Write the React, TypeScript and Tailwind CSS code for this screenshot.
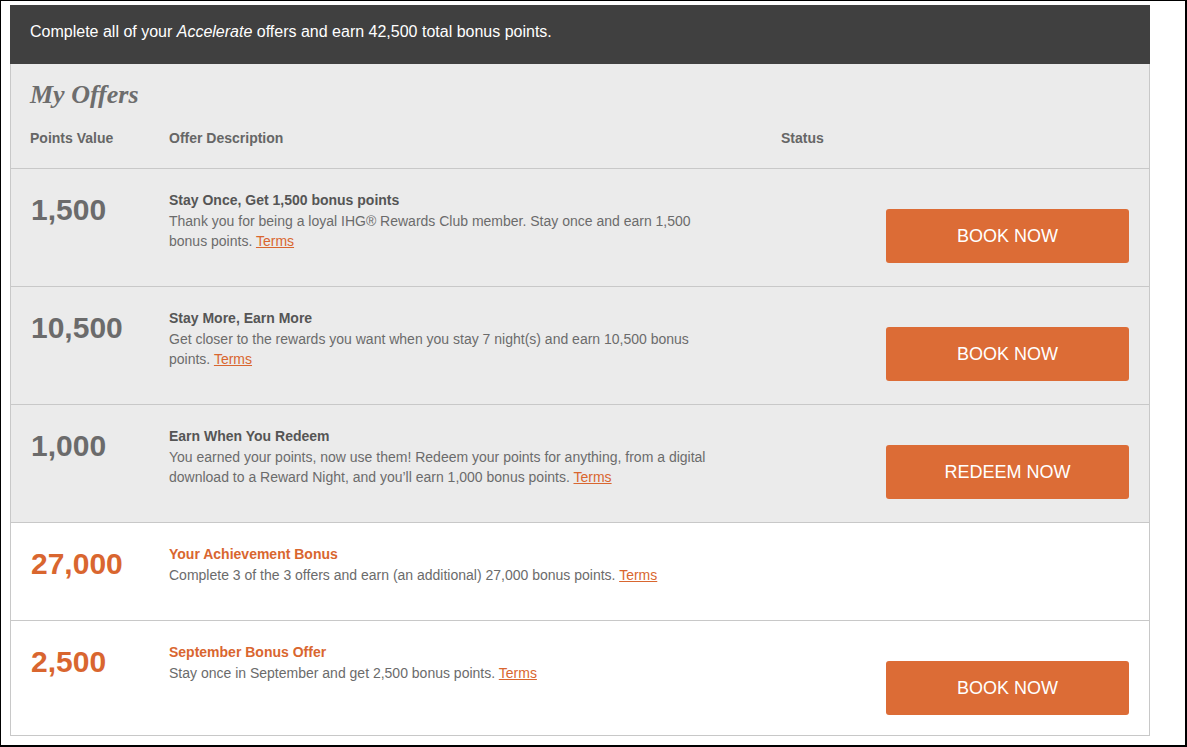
import React from "react";

type Offer = {
  points: string;
  title: string;
  desc: string;
  action?: string;
  highlight?: boolean;
  height: string;
};

const offers: Offer[] = [
  {
    points: "1,500",
    title: "Stay Once, Get 1,500 bonus points",
    desc: "Thank you for being a loyal IHG® Rewards Club member. Stay once and earn 1,500 bonus points.",
    action: "BOOK NOW",
    height: "h-[118px]",
  },
  {
    points: "10,500",
    title: "Stay More, Earn More",
    desc: "Get closer to the rewards you want when you stay 7 night(s) and earn 10,500 bonus points.",
    action: "BOOK NOW",
    height: "h-[118px]",
  },
  {
    points: "1,000",
    title: "Earn When You Redeem",
    desc: "You earned your points, now use them! Redeem your points for anything, from a digital download to a Reward Night, and you’ll earn 1,000 bonus points.",
    action: "REDEEM NOW",
    height: "h-[118px]",
  },
  {
    points: "27,000",
    title: "Your Achievement Bonus",
    desc: "Complete 3 of the 3 offers and earn (an additional) 27,000 bonus points.",
    highlight: true,
    height: "h-[98px]",
  },
  {
    points: "2,500",
    title: "September Bonus Offer",
    desc: "Stay once in September and get 2,500 bonus points.",
    action: "BOOK NOW",
    highlight: true,
    height: "h-[115px]",
  },
];

function OfferRow({ offer }: { offer: Offer }) {
  return (
    <div
      className={`flex border-t border-[#c8c8c8] pl-[20px] pr-[20px] ${offer.height} ${
        offer.highlight ? "bg-white" : "bg-[#ebebeb]"
      }`}
    >
      <div
        className={`w-[138px] shrink-0 pt-[26px] text-[30px] leading-[30px] font-bold ${
          offer.highlight ? "text-[#d9662f]" : "text-[#6b6b6b]"
        }`}
      >
        {offer.points}
      </div>
      <div className="w-[545px] shrink-0 pt-[22px]">
        <div
          className={`text-[14px] leading-[18px] font-bold ${
            offer.highlight ? "text-[#d9662f]" : "text-[#555555]"
          }`}
        >
          {offer.title}
        </div>
        <p className="mt-[2px] text-[14px] leading-[20px] text-[#6b6b6b]">
          {offer.desc}{" "}
          <a href="#" className="text-[#d9662f] underline">
            Terms
          </a>
        </p>
      </div>
      {offer.action && (
        <div className="ml-auto pt-[40px]">
          <button className="w-[243px] h-[54px] rounded-[3px] bg-[#dc6c36] text-white text-[18px] leading-none">
            {offer.action}
          </button>
        </div>
      )}
    </div>
  );
}

export default function App() {
  return (
    <div className="w-[1187px] h-[747px] bg-white border-t border-l border-r-2 border-b-2 border-black pl-[9px] pt-[4px] font-['Liberation_Sans',Arial,sans-serif] overflow-hidden">
      <div className="w-[1140px]">
        <div className="h-[59px] bg-[#404040] pl-[20px] pt-[17px] text-[16px] leading-[20px] text-white">
          Complete all of your <i>Accelerate</i> offers and earn 42,500 total bonus points.
        </div>
        <div className="border-l border-r border-b border-[#c8c8c8]">
          <div className="bg-[#ebebeb] pl-[19px] pt-[17px] pb-[22px]">
            <h2 className="text-[26px] leading-[28px] font-bold italic text-[#6d6d6d] font-['Liberation_Serif',Georgia,serif]">
              My Offers
            </h2>
            <div className="mt-[21px] flex text-[14px] leading-[16px] font-bold text-[#666666]">
              <div className="w-[139px]">Points Value</div>
              <div className="w-[612px]">Offer Description</div>
              <div>Status</div>
            </div>
          </div>
          {offers.map((offer) => (
            <OfferRow key={offer.title} offer={offer} />
          ))}
        </div>
      </div>
    </div>
  );
}
